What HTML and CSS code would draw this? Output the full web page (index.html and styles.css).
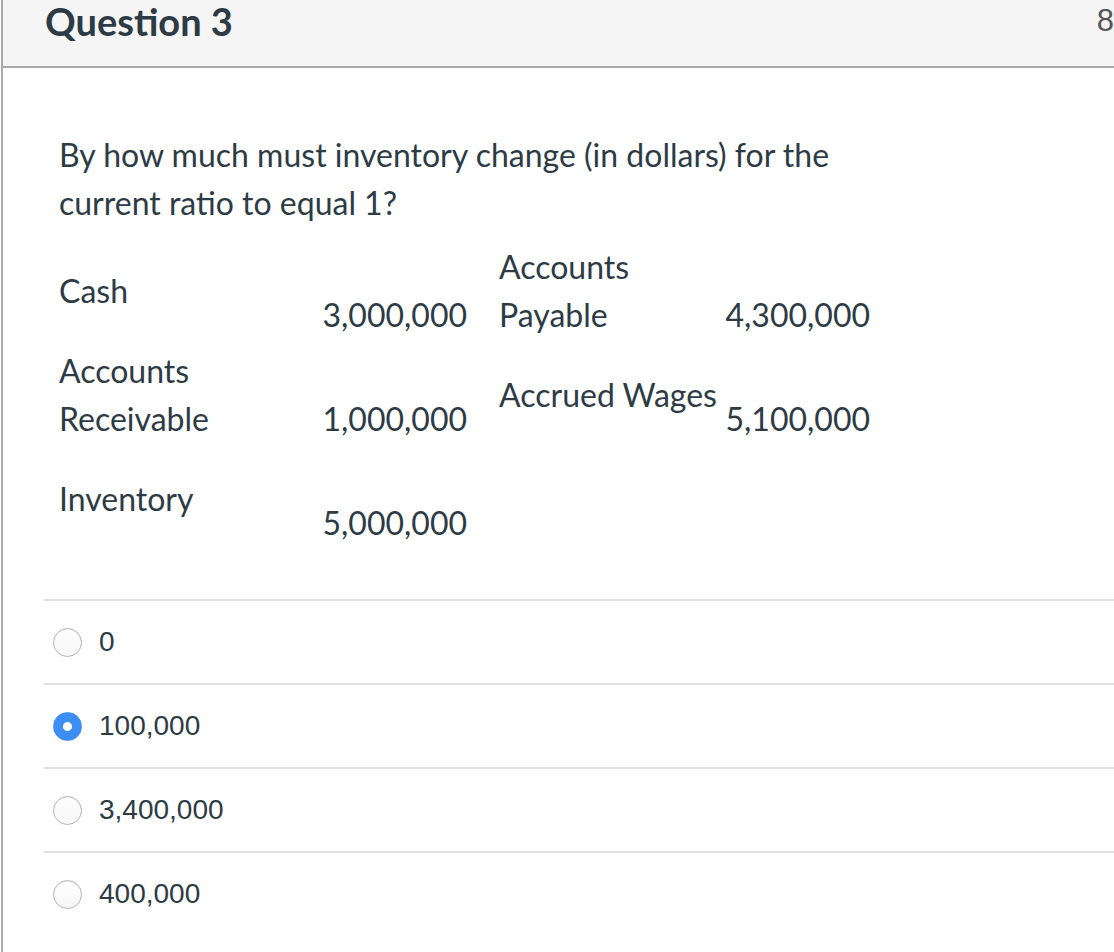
FILE: index.html
```html
<!DOCTYPE html>
<html lang="en">

<head>
  <meta charset="UTF-8">
  <title>Question 3</title>
  <link rel="stylesheet" href="styles.css">
</head>

<body>
  <div class="question">
    <div class="header">
      <h2>Question 3</h2>
      <span class="points">8 pts</span>
    </div>

    <div class="content">
      <p class="text">By how much must inventory change (in dollars) for the current ratio to equal 1?</p>

      <div class="balance">
        <div class="label">Cash</div>
        <div class="num first">3,000,000</div>
        <div class="label two-line">Accounts<br>Payable</div>
        <div class="num">4,300,000</div>

        <div class="label two-line">Accounts<br>Receivable</div>
        <div class="num first">1,000,000</div>
        <div class="label">Accrued Wages</div>
        <div class="num">5,100,000</div>

        <div class="label">Inventory</div>
        <div class="num first">5,000,000</div>
      </div>
    </div>

    <div class="answers">
      <label class="answer"><input type="radio" name="q3"><span>0</span></label>
      <label class="answer"><input type="radio" name="q3" checked><span>100,000</span></label>
      <label class="answer"><input type="radio" name="q3"><span>3,400,000</span></label>
      <label class="answer"><input type="radio" name="q3"><span>400,000</span></label>
    </div>
  </div>
</body>

</html>
```

FILE: styles.css
```css
html,
body {
  margin: 0;
  overflow: hidden;
}

body {
  font-family: Lato, "Open Sans", sans-serif;
  color: #2d3b45;
  background-color: #fff;
}

.question {
  width: 1176px;
  min-height: 952px;
  margin-left: 1px;
  border-left: 2px solid #aaa;
}

.header {
  display: flex;
  justify-content: space-between;
  height: 66px;
  padding: 0 15px 0 42px;
  background-color: #f5f5f5;
  border-bottom: 2px solid #aaa;
}

.header h2 {
  margin: 0;
  padding-top: 2px;
  font-size: 38px;
  line-height: 38px;
  font-weight: bold;
}

.points {
  padding-top: 3px;
  font-family: "Liberation Sans", Arial, sans-serif;
  font-size: 31px;
  line-height: 36px;
  color: #555;
}

.content {
  padding: 63px 0 0 56px;
}

.text {
  max-width: 830px;
  margin: 0 0 16px;
  font-size: 32px;
  line-height: 48px;
}

.balance {
  display: grid;
  grid-template-columns: 250px 190px 220px 151px;
  grid-auto-rows: 96px;
  row-gap: 8px;
  font-size: 32px;
  line-height: 48px;
}

.label {
  align-self: center;
  white-space: nowrap;
}

.two-line {
  align-self: stretch;
}

.num {
  align-self: end;
  justify-self: end;
  white-space: nowrap;
}

.num.first {
  padding-right: 32px;
}

.answers {
  margin: 52px 0 0 41px;
  border-top: 2px solid #e0e0e0;
}

.answer {
  display: flex;
  align-items: center;
  gap: 17px;
  height: 82px;
  padding-left: 9px;
  border-bottom: 2px solid #e0e0e0;
  font-family: "Liberation Sans", Arial, sans-serif;
  font-size: 28px;
}

.answer:last-child {
  border-bottom: none;
}

.answer input {
  appearance: none;
  width: 29px;
  height: 29px;
  margin: 0;
  border: 1px solid #b4b4b4;
  border-radius: 50%;
  background: linear-gradient(#fff, #f6f6f6);
  box-shadow: inset 0 1px 1px rgba(0, 0, 0, 0.06);
}

.answer input:checked {
  border-color: #3c8ef5;
  background: radial-gradient(circle, #fff 0 4px, #3c8ef5 5px);
  box-shadow: none;
}
```
